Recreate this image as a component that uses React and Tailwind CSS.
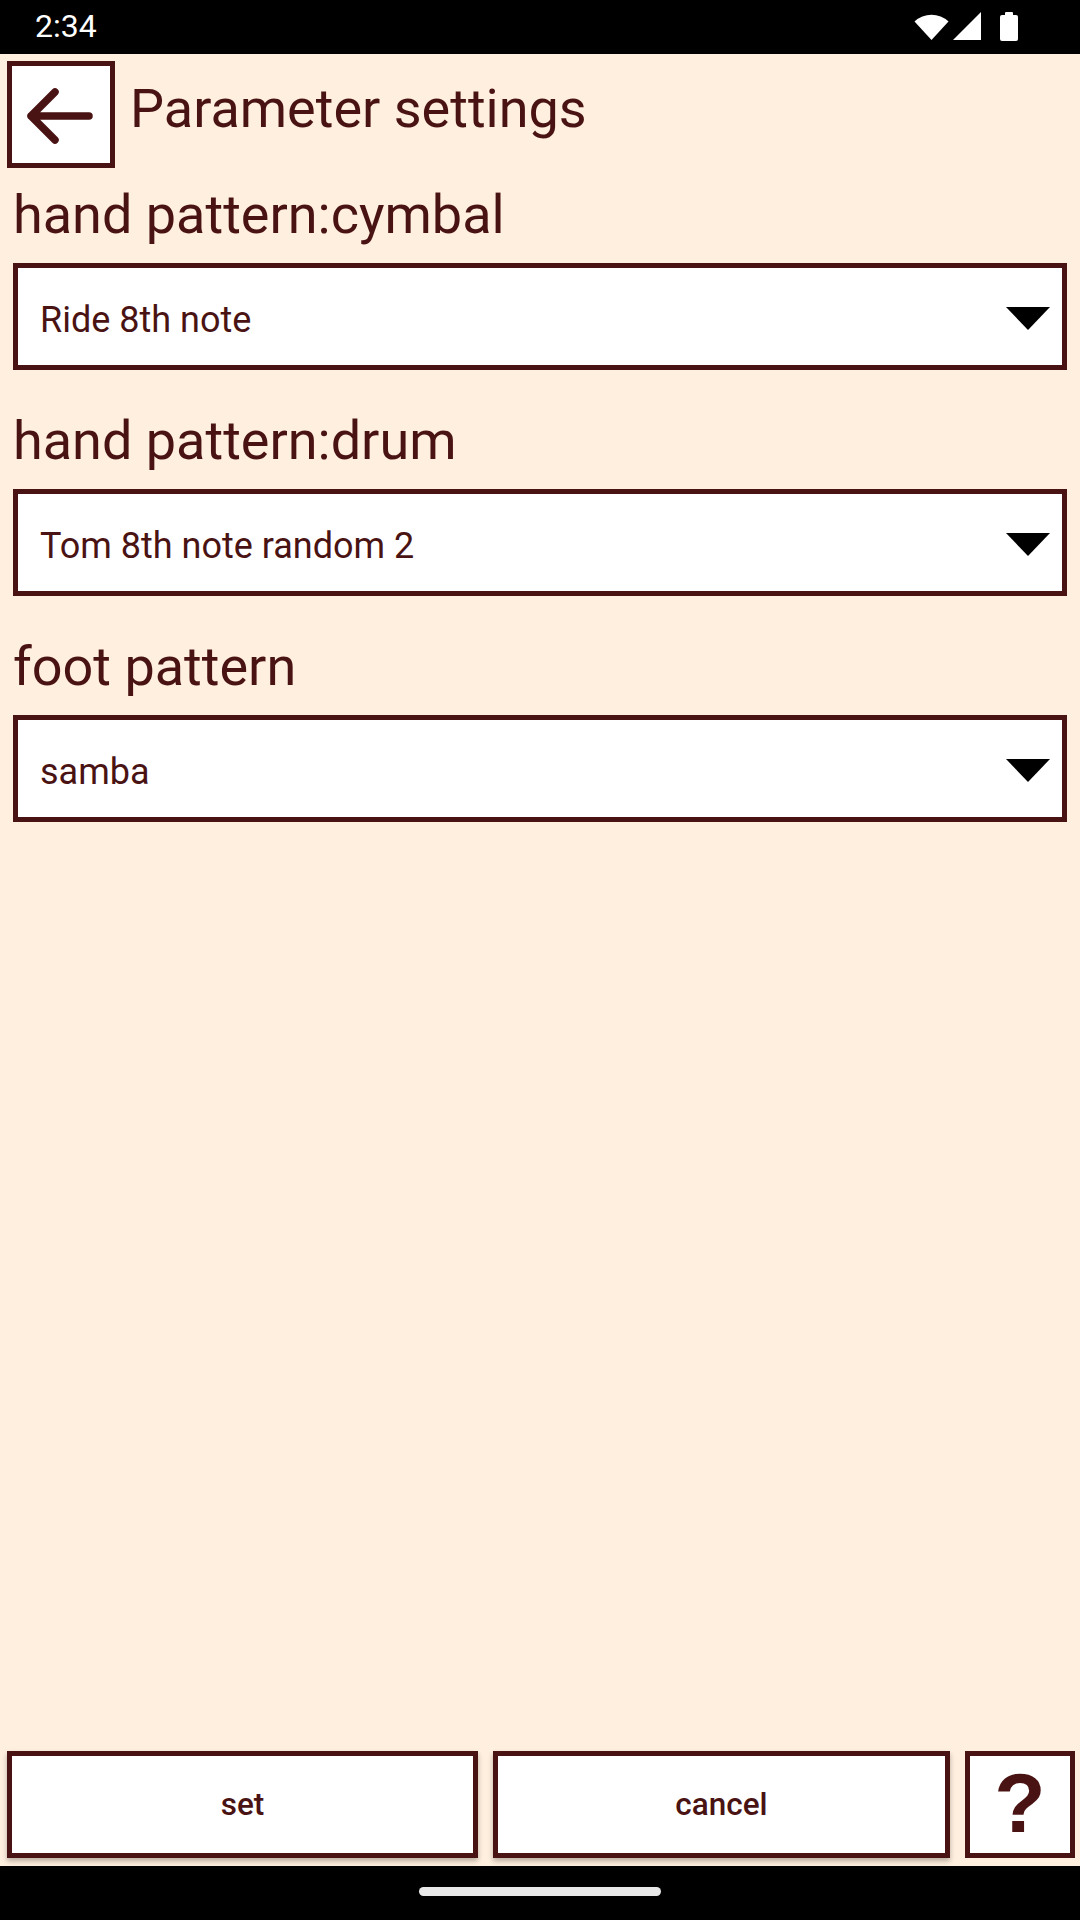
import React, { useState } from 'react';

const options = {
  cymbal: ['Ride 8th note', 'Ride 4th note', 'Hi-hat 8th note', 'Hi-hat 16th note'],
  drum: ['Tom 8th note random 1', 'Tom 8th note random 2', 'Snare 8th note'],
  foot: ['samba', 'bossa nova', 'rock', 'none'],
};

function StatusBar() {
  return (
    <div className="h-[54px] bg-black flex items-center justify-between pl-[35px] pr-[62px] shrink-0">
      <span className="text-white text-[32px] leading-none font-['Roboto',sans-serif] pb-[2px]">2:34</span>
      <div className="flex items-center gap-[2px] pb-[2px]">
        {/* wifi */}
        <svg width="35" height="28" viewBox="0 0 35 28">
          <path d="M17.5 28 L0.5 9.5 A25 25 0 0 1 34.5 9.5 Z" fill="#fff" />
        </svg>
        {/* signal */}
        <svg width="28" height="28" viewBox="0 0 28 28" className="ml-[2px]">
          <path d="M28 0 L28 28 L0 28 Z" fill="#fff" />
        </svg>
        {/* battery */}
        <svg width="18" height="29" viewBox="0 0 18 29" className="ml-[17px]">
          <rect x="5" y="0" width="8" height="4" rx="1" fill="#fff" />
          <rect x="0" y="3" width="18" height="26" rx="2" fill="#fff" />
        </svg>
      </div>
    </div>
  );
}

function Spinner({ value, items, onChange }) {
  return (
    <div className="relative mx-[13px] h-[107px] border-[5px] border-[#4a1313] bg-white flex items-center">
      <select
        value={value}
        onChange={(e) => onChange(e.target.value)}
        className="absolute inset-0 w-full h-full opacity-0 cursor-pointer"
      >
        {items.map((o) => (
          <option key={o} value={o}>{o}</option>
        ))}
      </select>
      <span className="flex-1 pl-[22px] pt-[6px] text-[36px] text-[#4a1313] font-['Roboto',sans-serif]">
        {value}
      </span>
      <svg width="44" height="23" viewBox="0 0 44 23" className="mr-[12px] mt-[4px]">
        <path d="M0 0 H44 L22 23 Z" fill="#000" />
      </svg>
    </div>
  );
}

function Label({ children }) {
  return (
    <div className="pl-[13px] text-[54px] leading-[62px] text-[#4a1313] font-['Roboto',sans-serif] mb-[17px]">
      {children}
    </div>
  );
}

export default function App() {
  const [cymbal, setCymbal] = useState('Ride 8th note');
  const [drum, setDrum] = useState('Tom 8th note random 2');
  const [foot, setFoot] = useState('samba');

  return (
    <div className="min-h-screen h-[1920px] flex flex-col bg-[#ffefdf] font-['Roboto',sans-serif]">
      <StatusBar />

      <div className="flex-1 flex flex-col">
        {/* header */}
        <div className="flex items-start pt-[7px] pl-[7px]">
          <button className="w-[108px] h-[107px] border-[5px] border-[#4a1313] bg-white flex items-center justify-center">
            <svg width="98" height="97" viewBox="0 0 98 97" className="blur-[0.6px]">
              <path
                d="M19 50 H77 M43 26 L19 50 L43 74"
                fill="none"
                stroke="#4a1313"
                strokeWidth="7.5"
                strokeLinecap="round"
                strokeLinejoin="round"
              />
            </svg>
          </button>
          <h1 className="ml-[15px] mt-[17px] text-[54px] leading-[62px] text-[#4a1313] font-normal">
            Parameter settings
          </h1>
        </div>

        <div className="mt-[16px]">
          <Label>hand pattern:cymbal</Label>
          <Spinner value={cymbal} items={options.cymbal} onChange={setCymbal} />
        </div>

        <div className="mt-[40px]">
          <Label>hand pattern:drum</Label>
          <Spinner value={drum} items={options.drum} onChange={setDrum} />
        </div>

        <div className="mt-[40px]">
          <Label>foot pattern</Label>
          <Spinner value={foot} items={options.foot} onChange={setFoot} />
        </div>
      </div>

      {/* bottom buttons */}
      <div className="flex items-center pl-[7px] pb-[8px] gap-[15px]">
        <button className="w-[471px] h-[107px] border-[5px] border-[#4a1313] bg-white shadow-[0_3px_5px_rgba(0,0,0,0.28)] text-[31.5px] font-medium text-[#4a1313]">
          set
        </button>
        <button className="w-[457px] h-[107px] border-[5px] border-[#4a1313] bg-white shadow-[0_3px_5px_rgba(0,0,0,0.28)] text-[31.5px] font-medium text-[#4a1313]">
          cancel
        </button>
        <button className="w-[110px] h-[107px] border-[5px] border-[#4a1313] bg-white flex items-center justify-center">
          <span className="text-[84px] leading-none font-bold text-[#4a1313] font-['Liberation_Sans',sans-serif] blur-[0.5px] pb-[4px]">
            ?
          </span>
        </button>
      </div>

      {/* nav bar */}
      <div className="h-[54px] bg-black flex items-center justify-center shrink-0">
        <div className="w-[242px] h-[9px] rounded-full bg-[#e8e8e8] -mt-[4px]" />
      </div>
    </div>
  );
}
